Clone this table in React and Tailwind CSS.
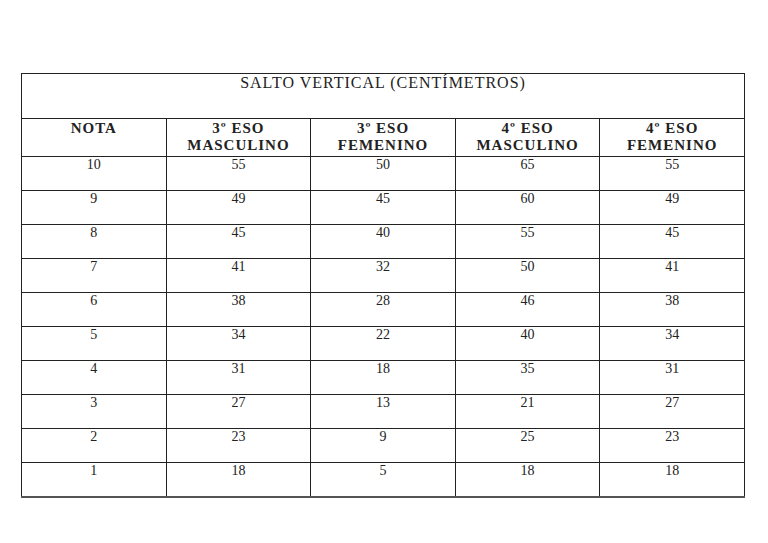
import React from 'react'

const rows = [
  ['10', '55', '50', '65', '55'],
  ['9', '49', '45', '60', '49'],
  ['8', '45', '40', '55', '45'],
  ['7', '41', '32', '50', '41'],
  ['6', '38', '28', '46', '38'],
  ['5', '34', '22', '40', '34'],
  ['4', '31', '18', '35', '31'],
  ['3', '27', '13', '21', '27'],
  ['2', '23', '9', '25', '23'],
  ['1', '18', '5', '18', '18'],
]

const headers = [
  ['NOTA'],
  ['3º ESO', 'MASCULINO'],
  ['3º ESO', 'FEMENINO'],
  ['4º ESO', 'MASCULINO'],
  ['4º ESO', 'FEMENINO'],
]

const App = () => {
  return (
    <div className="w-[768px] h-[543px] bg-white pt-[73px] pl-[21px]" style={{ fontFamily: '"Liberation Serif", serif' }}>
      <table className="w-[724px] border-collapse table-fixed text-[#222] text-[15px] border-b-2 border-b-[#555]">
        <tbody>
          <tr className="h-[45px]">
            <td colSpan={5} className="border border-[#222] text-center align-top leading-[17px] text-[16px] tracking-[1px]">
              SALTO VERTICAL (CENTÍMETROS)
            </td>
          </tr>
          <tr className="h-[38px]">
            {headers.map((h, i) => (
              <td key={i} className="border border-[#222] text-center align-top font-bold leading-[17px] pt-[1px] tracking-[1px]">
                {h.map((line, j) => <div key={j}>{line}</div>)}
              </td>
            ))}
          </tr>
          {rows.map((r, i) => (
            <tr key={i} className="h-[34px]">
              {r.map((c, j) => (
                <td key={j} className="border border-[#222] text-center align-top leading-[15px] text-[14px]">
                  {c}
                </td>
              ))}
            </tr>
          ))}
        </tbody>
      </table>
    </div>
  )
}

export default App
